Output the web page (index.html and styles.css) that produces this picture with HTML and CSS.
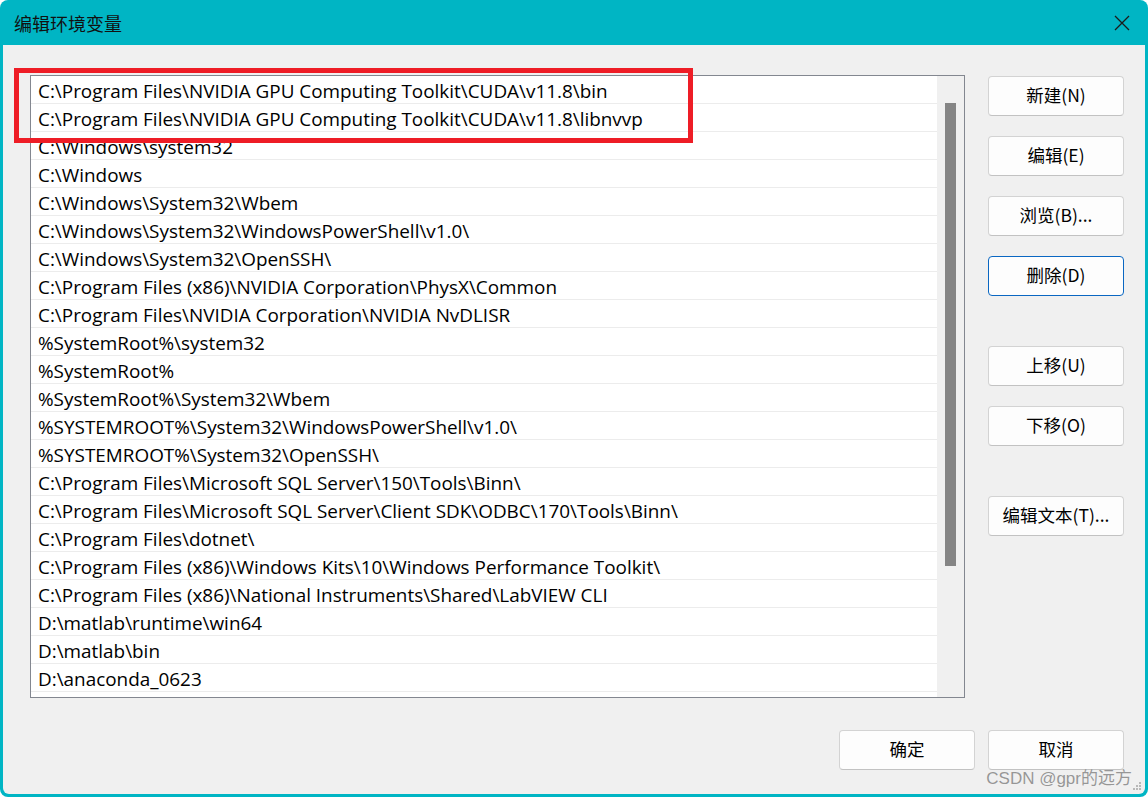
FILE: index.html
```html
<!DOCTYPE html>
<html lang="zh-CN">

<head>
  <meta charset="UTF-8">
  <meta name="viewport" content="width=device-width, initial-scale=1.0">
  <title>编辑环境变量</title>
  <link rel="stylesheet" href="styles.css">
</head>

<body>
  <div class="window">
    <!-- 标题栏 -->
    <div class="titlebar">
      <span class="title">编辑环境变量</span>
      <span class="close">
        <svg width="16" height="16" viewBox="0 0 16 16">
          <path d="M1 1 L15 15 M15 1 L1 15" stroke="#1b1b1b" stroke-width="1.3" fill="none" />
        </svg>
      </span>
    </div>

    <div class="client">
      <div class="content">
        <div class="list">
          <div class="rows">
            <div class="row">C:\Program Files\NVIDIA GPU Computing Toolkit\CUDA\v11.8\bin</div>
            <div class="row">C:\Program Files\NVIDIA GPU Computing Toolkit\CUDA\v11.8\libnvvp</div>
            <div class="row">C:\Windows\system32</div>
            <div class="row">C:\Windows</div>
            <div class="row">C:\Windows\System32\Wbem</div>
            <div class="row">C:\Windows\System32\WindowsPowerShell\v1.0\</div>
            <div class="row">C:\Windows\System32\OpenSSH\</div>
            <div class="row">C:\Program Files (x86)\NVIDIA Corporation\PhysX\Common</div>
            <div class="row">C:\Program Files\NVIDIA Corporation\NVIDIA NvDLISR</div>
            <div class="row">%SystemRoot%\system32</div>
            <div class="row">%SystemRoot%</div>
            <div class="row">%SystemRoot%\System32\Wbem</div>
            <div class="row">%SYSTEMROOT%\System32\WindowsPowerShell\v1.0\</div>
            <div class="row">%SYSTEMROOT%\System32\OpenSSH\</div>
            <div class="row">C:\Program Files\Microsoft SQL Server\150\Tools\Binn\</div>
            <div class="row">C:\Program Files\Microsoft SQL Server\Client SDK\ODBC\170\Tools\Binn\</div>
            <div class="row">C:\Program Files\dotnet\</div>
            <div class="row">C:\Program Files (x86)\Windows Kits\10\Windows Performance Toolkit\</div>
            <div class="row">C:\Program Files (x86)\National Instruments\Shared\LabVIEW CLI</div>
            <div class="row">D:\matlab\runtime\win64</div>
            <div class="row">D:\matlab\bin</div>
            <div class="row">D:\anaconda_0623</div>
          </div>
          <div class="scrollbar">
            <div class="thumb"></div>
          </div>
        </div>

        <div class="side">
          <div class="group">
            <button class="btn">新建(N)</button>
            <button class="btn">编辑(E)</button>
            <button class="btn">浏览(B)...</button>
            <button class="btn focus">删除(D)</button>
          </div>
          <div class="group">
            <button class="btn">上移(U)</button>
            <button class="btn">下移(O)</button>
          </div>
          <div class="group">
            <button class="btn">编辑文本(T)...</button>
          </div>
        </div>
      </div>

      <div class="footer">
        <button class="btn">确定</button>
        <button class="btn">取消</button>
      </div>

      <!-- 红框标注 -->
      <div class="mark"></div>

      <div class="watermark">CSDN @gpr的远方</div>
      <svg class="grip" width="9" height="9" viewBox="0 0 9 9">
        <rect x="6" y="0" width="2" height="2" fill="#b8b8b8" />
        <rect x="3" y="3" width="2" height="2" fill="#b8b8b8" />
        <rect x="6" y="3" width="2" height="2" fill="#b8b8b8" />
        <rect x="0" y="6" width="2" height="2" fill="#b8b8b8" />
        <rect x="3" y="6" width="2" height="2" fill="#b8b8b8" />
        <rect x="6" y="6" width="2" height="2" fill="#b8b8b8" />
      </svg>
    </div>
  </div>
</body>

</html>
```

FILE: styles.css
```css
body {
  margin: 0;
  background: #fff;
  font-family: "Open Sans", "Noto Sans CJK SC", sans-serif;
}

/* 窗口外框 */
.window {
  width: 1148px;
  height: 797px;
  background: #00b5c4;
  border-radius: 8px;
  display: flex;
  flex-direction: column;
  overflow: hidden;
}

.titlebar {
  height: 45px;
  flex: none;
  display: flex;
  align-items: center;
  justify-content: space-between;
  padding-left: 14px;
  padding-right: 18px;
}

.title {
  font-family: "Noto Sans CJK SC", sans-serif;
  font-size: 18px;
  color: #111;
}

.close {
  display: flex;
  margin-top: 1px;
}

.client {
  flex: 1;
  margin: 0 3px 3px;
  background: #f0f0f0;
  border-radius: 0 0 6px 6px;
  position: relative;
  padding: 30px 0 0 27px;
}

.content {
  display: flex;
}

/* 列表 */
.list {
  width: 933px;
  height: 621px;
  border: 1px solid #838790;
  background: #fff;
  display: flex;
}

.rows {
  width: 906px;
}

.row {
  height: 24px;
  line-height: 24px;
  padding-top: 3px;
  border-bottom: 1px solid #ececec;
  padding-left: 7px;
  font-size: 18.9px;
  color: #000;
  white-space: nowrap;
}

.scrollbar {
  width: 27px;
  background: #f0f0f0;
}

.thumb {
  width: 11px;
  height: 463px;
  margin: 27px 0 0 8px;
  background: #858585;
}

/* 右侧按钮 */
.side {
  margin-left: 23px;
  padding-top: 1px;
  display: flex;
  flex-direction: column;
  gap: 50px;
}

.group {
  display: flex;
  flex-direction: column;
  gap: 20px;
}

.btn {
  width: 136px;
  height: 40px;
  background: #fdfdfd;
  border: 1px solid #d3d3d3;
  border-bottom-color: #c2c2c2;
  border-radius: 4px;
  font-family: "Noto Sans CJK SC", sans-serif;
  font-size: 17.5px;
  line-height: 1;
  color: #000;
  padding: 0 0 2px;
}

.btn.focus {
  border-color: #0a67c2;
}

.footer {
  display: flex;
  justify-content: flex-end;
  gap: 13px;
  margin-top: 32px;
  padding-right: 21px;
}

/* 截图上的红框 */
.mark {
  position: absolute;
  left: 11px;
  top: 23px;
  width: 669px;
  height: 65px;
  border: 5px solid #ee1d26;
}

.watermark {
  position: absolute;
  right: 13px;
  bottom: 5px;
  font-family: "Liberation Sans", "Noto Sans CJK SC", sans-serif;
  font-size: 17px;
  color: rgba(120, 120, 120, 0.75);
}

.grip {
  position: absolute;
  right: 3px;
  bottom: 3px;
}
```
